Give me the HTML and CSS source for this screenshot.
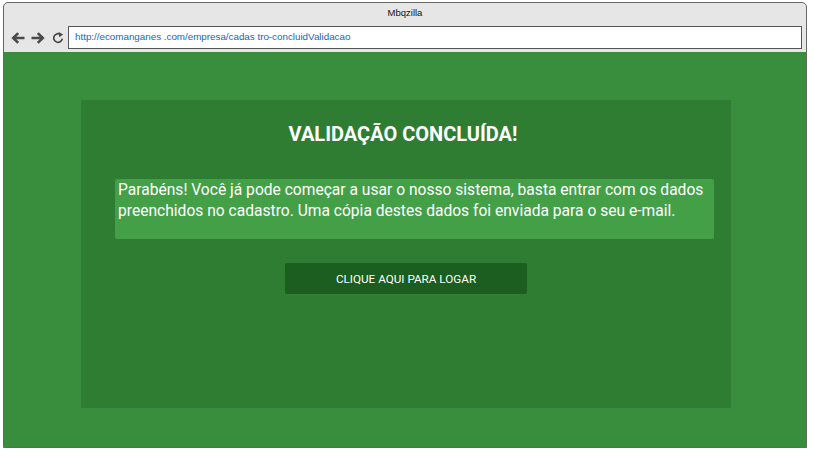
FILE: index.html
```html
<!DOCTYPE html>
<html lang="pt">
<head>
<meta charset="utf-8">
<title>Mbqzilla</title>
<link rel="stylesheet" href="styles.css">
</head>
<body>
<div class="window">
  <div class="titlebar">Mbqzilla</div>
  <div class="navbar">
    <div class="nav-icons">
      <svg class="icon" width="14" height="12" viewBox="0 0 14 12"><path d="M13.5 6H2.5M7.2 1.1L2.2 6l5 4.9" fill="none" stroke="#4a4a4a" stroke-width="2.6"/></svg>
      <svg class="icon" width="14" height="12" viewBox="0 0 14 12"><path d="M0.5 6h10.9M6.8 1.1L11.8 6l-5 4.9" fill="none" stroke="#4a4a4a" stroke-width="2.6"/></svg>
      <svg class="icon reload" width="12" height="12" viewBox="0 0 12 12"><path d="M10.3 6.6A4.3 4.3 0 1 1 7.6 2" fill="none" stroke="#4a4a4a" stroke-width="1.7"/><path d="M6.6 0L11.2 2.6L7.2 5.2z" fill="#4a4a4a"/></svg>
    </div>
    <div class="urlbar">http://ecomanganes .com/empresa/cadas tro-concluidValidacao</div>
  </div>
  <div class="content">
    <div class="panel">
      <h1 class="panel-title">VALIDAÇÃO CONCLUÍDA!</h1>
      <div class="message">Parabéns! Você já pode começar a usar o nosso sistema, basta entrar com os dados preenchidos no cadastro. Uma cópia destes dados foi enviada para o seu e-mail.</div>
      <div class="actions">
        <button class="login-btn">CLIQUE AQUI PARA LOGAR</button>
      </div>
    </div>
  </div>
</div>
</body>
</html>
```
FILE: styles.css
```css
html, body {
  margin: 0;
  padding: 0;
  background: #ffffff;
}

.window {
  margin: 2px 0 0 3px;
  width: 802px;
  height: 444px;
  border: 1px solid #666666;
  border-radius: 5px 5px 0 0;
  background: #e6e6e6;
  display: flex;
  flex-direction: column;
  overflow: hidden;
}

.titlebar {
  height: 20px;
  line-height: 20px;
  text-align: center;
  font-family: "Liberation Sans", Arial, sans-serif;
  font-size: 9.5px;
  color: #111111;
}

.navbar {
  display: flex;
  align-items: center;
  height: 29px;
  padding: 0 4px 0 7px;
  box-sizing: border-box;
}

.nav-icons {
  display: flex;
  align-items: center;
  gap: 6px;
  width: 57px;
  margin-top: 1px;
}

.icon {
  display: block;
}

.reload {
  margin-left: 1px;
}

.urlbar {
  flex: 1;
  height: 23px;
  box-sizing: border-box;
  border: 1.5px solid #555555;
  background: #ffffff;
  font-family: "Liberation Sans", Arial, sans-serif;
  font-size: 9.8px;
  line-height: 20px;
  color: #1565c0;
  padding-left: 6px;
}

.content {
  flex: 1;
  background: #388e3c;
  padding: 47px 75px 0 77px;
  border-top: 1px solid #3a8a3e;
}

.panel {
  height: 308px;
  background: #2e7d32;
  display: flex;
  flex-direction: column;
}

.panel-title {
  margin: 22px 0 0 0;
  padding-right: 6px;
  height: 24px;
  line-height: 24px;
  text-align: center;
  font-family: Roboto, "Liberation Sans", sans-serif;
  font-weight: 700;
  font-size: 20px;
  color: #ffffff;
}

.message {
  margin: 33px 17px 0 34px;
  height: 60px;
  box-sizing: border-box;
  padding: 1px 3px;
  background: #43a047;
  border-radius: 2px;
  font-family: Roboto, "Liberation Sans", sans-serif;
  font-size: 15.6px;
  line-height: 20.5px;
  color: #ffffff;
}

.actions {
  display: flex;
  justify-content: center;
  margin-top: 24px;
}

.login-btn {
  width: 242px;
  height: 31px;
  border: none;
  border-radius: 2px;
  background: #1b5e20;
  color: #ffffff;
  font-family: Roboto, "Liberation Sans", sans-serif;
  font-size: 11.7px;
  padding: 0;
}
```
